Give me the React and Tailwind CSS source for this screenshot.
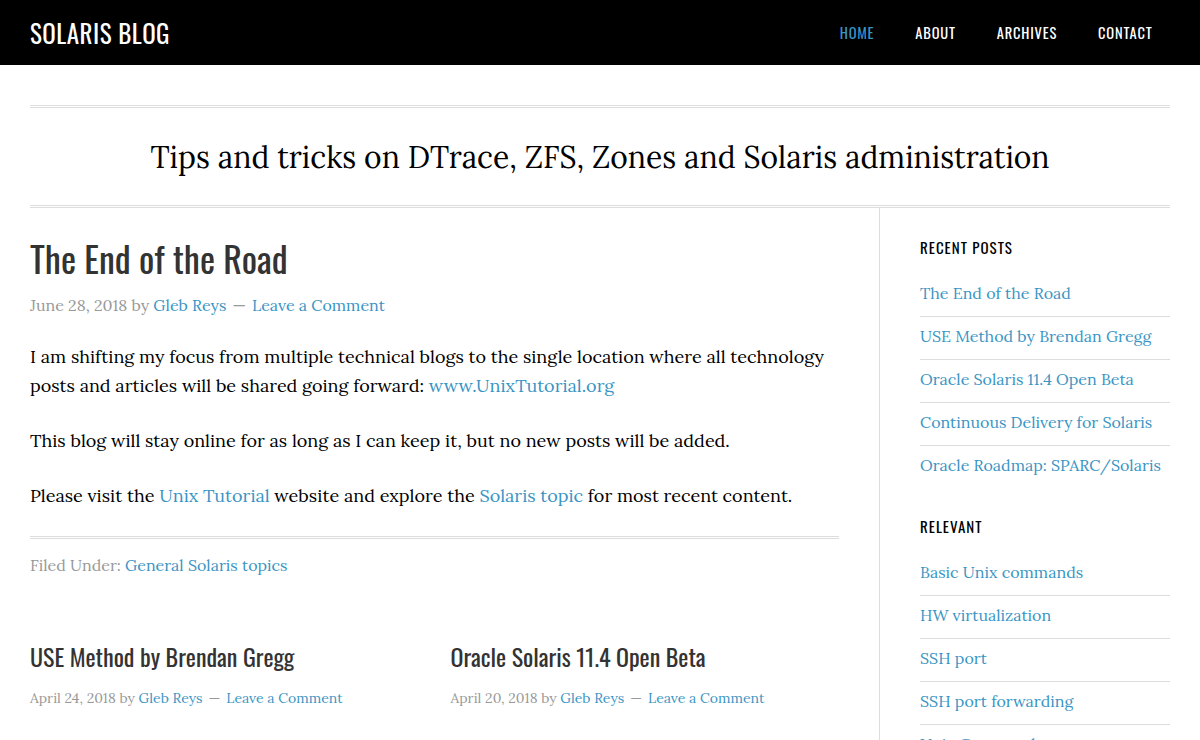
import React from 'react';

const NAV = ['Home', 'About', 'Archives', 'Contact'];

const RECENT = [
  'The End of the Road',
  'USE Method by Brendan Gregg',
  'Oracle Solaris 11.4 Open Beta',
  'Continuous Delivery for Solaris',
  'Oracle Roadmap: SPARC/Solaris',
];

const RELEVANT = [
  'Basic Unix commands',
  'HW virtualization',
  'SSH port',
  'SSH port forwarding',
  'Unix Commands',
];

const head = "font-['Oswald','Liberation_Sans_Narrow','DejaVu_Sans_Condensed',sans-serif]";
const serif = "font-['Lora','DejaVu_Serif',serif]";

function Meta({ date, small }) {
  return (
    <p className={`${small ? 'text-[14px]' : 'text-[16px]'} text-[#999]`}>
      {date} by <a className="text-[#3a95c4]">Gleb Reys</a>
      <span className="mx-1.5">—</span>
      <a className="text-[#3a95c4]">Leave a Comment</a>
    </p>
  );
}

function Widget({ title, items, last }) {
  return (
    <section className={last ? '' : 'mb-[27px]'}>
      <h4 className={`${head} text-[15px] uppercase tracking-[1px] text-black mb-[22px] leading-[22px]`}>{title}</h4>
      <ul>
        {items.map((it, i) => (
          <li
            key={it}
            className={`text-[16px] leading-[26px] pb-[10px] mb-[6px] ${i < items.length - 1 || last ? 'border-b border-[#ddd]' : ''}`}
          >
            <a className="text-[#3a95c4]">{it}</a>
          </li>
        ))}
      </ul>
    </section>
  );
}

export default function App() {
  return (
    <div className={`${serif} bg-white text-black w-[1200px] h-[740px] overflow-hidden`}>
      {/* header */}
      <header className="bg-black h-[65px] px-[30px] flex items-center justify-between">
        <h1 className={`${head} text-white text-[25px] uppercase tracking-[0.5px] leading-none`}>Solaris Blog</h1>
        <nav className="flex -mr-[3px]">
          {NAV.map((n, i) => (
            <a
              key={n}
              className={`${head} px-[20.5px] text-[14.5px] uppercase tracking-[0.8px] ${i === 0 ? 'text-[#3a95c4]' : 'text-white'}`}
            >
              {n}
            </a>
          ))}
        </nav>
      </header>

      <div className="px-[30px]">
        {/* tagline */}
        <div className="mt-[40px] border-y-[3px] border-double border-[#ddd] h-[103px] flex items-center justify-center">
          <p className="text-[30px] leading-none text-black">Tips and tricks on DTrace, ZFS, Zones and Solaris administration</p>
        </div>

        <div className="flex">
          {/* main */}
          <main className="w-[849px] pr-[40px] pt-[28px]">
            <article>
              <h2 className={`${head} text-[36px] leading-[44px] text-[#333]`}>The End of the Road</h2>
              <div className="mt-[13px]">
                <Meta date="June 28, 2018" />
              </div>
              <div className="mt-[25px] text-[18px] leading-[29px] space-y-[26px]">
                <p>
                  I am shifting my focus from multiple technical blogs to the single location where all technology posts and articles will be shared going forward:{' '}
                  <a className="text-[#3a95c4]">www.UnixTutorial.org</a>
                </p>
                <p>This blog will stay online for as long as I can keep it, but no new posts will be added.</p>
                <p>
                  Please visit the <a className="text-[#3a95c4]">Unix Tutorial</a> website and explore the{' '}
                  <a className="text-[#3a95c4]">Solaris topic</a> for most recent content.
                </p>
              </div>
              <div className="mt-[26px] border-t-[3px] border-double border-[#ddd] pt-[14px]">
                <p className="text-[16px] text-[#999]">
                  Filed Under: <a className="text-[#3a95c4]">General Solaris topics</a>
                </p>
              </div>
            </article>

            <div className="grid grid-cols-2 gap-x-[32px] mt-[63px]">
              <article>
                <h2 className={`${head} text-[24px] leading-[32px] text-[#333]`}>USE Method by Brendan Gregg</h2>
                <div className="mt-[16px]">
                  <Meta date="April 24, 2018" small />
                </div>
              </article>
              <article>
                <h2 className={`${head} text-[24px] leading-[32px] text-[#333]`}>Oracle Solaris 11.4 Open Beta</h2>
                <div className="mt-[16px]">
                  <Meta date="April 20, 2018" small />
                </div>
              </article>
            </div>
          </main>

          {/* sidebar */}
          <aside className="flex-1 border-l border-[#ddd] pl-[40px] pt-[28px] h-[540px]">
            <Widget title="Recent Posts" items={RECENT} />
            <Widget title="Relevant" items={RELEVANT} last />
          </aside>
        </div>
      </div>
    </div>
  );
}
